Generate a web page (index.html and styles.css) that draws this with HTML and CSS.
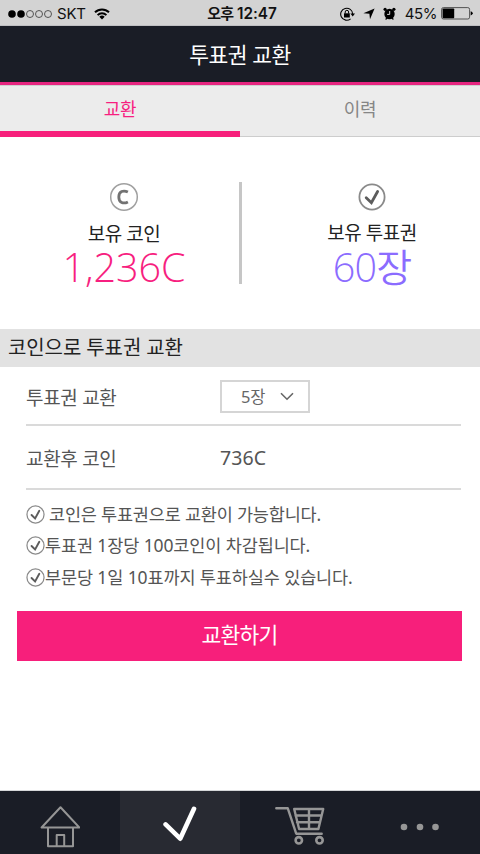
FILE: index.html
```html
<!DOCTYPE html>
<html lang="ko">
<head>
<meta charset="utf-8">
<title>투표권 교환</title>
<link rel="stylesheet" href="styles.css">
</head>
<body>
<svg class="defs" width="0" height="0">
  <symbol id="check-circle" viewBox="0 0 28 28">
    <circle cx="14" cy="14" r="12.6" fill="none" stroke="#8a8a8a" stroke-width="1.8"/>
    <path d="M8.2 14.7l5.2 5L19.6 8.5" fill="none" stroke="#5c5c5c" stroke-width="2.8" stroke-linecap="round"/>
  </symbol>
</svg>
<div class="status">
  <div class="status-left">
    <svg width="45" height="10" viewBox="0 0 45 10"><circle cx="4" cy="5" r="3.8"/><circle cx="13" cy="5" r="3.8"/><g fill="none" stroke="#333" stroke-width=".8"><circle cx="22" cy="5" r="3.5"/><circle cx="31" cy="5" r="3.5"/><circle cx="40" cy="5" r="3.5"/></g></svg>
    <span class="carrier">SKT</span>
    <svg class="wifi" width="16" height="12" viewBox="0 0 16 12"><g fill="none" stroke="#000" stroke-width="2"><path d="M1 4.3a10 10 0 0 1 14 0"/><path d="M3.6 7.1a6.2 6.2 0 0 1 8.8 0"/></g><path d="M5.3 8.8a4 4 0 0 1 5.4 0L8 11.6z"/></svg>
  </div>
  <div class="clock"><span class="ampm">오후</span> 12:47</div>
  <div class="status-right">
    <svg width="15" height="14" viewBox="0 0 15 14"><path d="M10.6 11.8A6 6 0 1 1 12.7 7" fill="none" stroke="#000" stroke-width="1.1"/><path d="M10.4 6.4h4.6l-2.3 3z"/><rect x="4" y="6.3" width="5.8" height="4.2"/><path d="M5.2 6.5V5a1.7 1.7 0 0 1 3.4 0v1.5" fill="none" stroke="#000"/></svg>
    <svg class="loc" width="12" height="12" viewBox="0 0 12 12"><path d="M11.6.4L7 11.3 6.4 5.8.4 5.2z"/></svg>
    <svg class="alarm" width="13" height="13" viewBox="0 0 13 13"><circle cx="6.5" cy="7" r="5.2"/><circle cx="2.1" cy="2.3" r="1.6"/><circle cx="10.9" cy="2.3" r="1.6"/><path d="M2.6 12.5l1.3-1.4M10.4 12.5L9.1 11.1" stroke="#000" stroke-width="1.2"/><path d="M6.7 4v3.4H4.1" fill="none" stroke="#d3d3d3" stroke-width="1"/></svg>
    <span class="percent">45%</span>
    <svg class="battery" width="32" height="13" viewBox="0 0 32 13"><rect x=".6" y=".6" width="28" height="11.4" rx="1.8" fill="none" stroke="#444" stroke-width=".9"/><rect x="1.6" y="1.6" width="11.6" height="9.6" rx=".7"/><path d="M29.7 4.2q2 .6 2 2.1t-2 2.1z"/></svg>
  </div>
</div>
<header class="title"><h1>투표권 교환</h1></header>
<nav class="tabs">
  <div class="tab active"><span>교환</span></div>
  <div class="tab"><span>이력</span></div>
</nav>
<section class="stats">
  <div class="stat coins">
    <svg width="30" height="30" viewBox="0 0 30 30"><circle cx="15" cy="15" r="13.3" fill="none" stroke="#a0a0a0" stroke-width="1.5"/><path d="M18.9 10.1C14.4 7.8 9.8 9.3 9.8 15s4.6 7.2 9.1 4.9" fill="none" stroke="#727272" stroke-width="2.8"/></svg>
    <div class="label"><span>보유 코인</span></div>
    <div class="value"><span>1,236C</span></div>
  </div>
  <div class="divider"></div>
  <div class="stat tickets">
    <svg width="28" height="28"><use href="#check-circle"/></svg>
    <div class="label"><span>보유 투표권</span></div>
    <div class="value"><span>60<b>장</b></span></div>
  </div>
</section>
<h2 class="section-title">코인으로 투표권 교환</h2>
<div class="rows">
  <div class="row first"><span class="name">투표권 교환</span>
    <div class="select"><span>5장</span><svg width="14" height="9" viewBox="0 0 14 9"><path d="M1 1.2l6 6 6-6" fill="none" stroke="#666" stroke-width="1.6"/></svg></div>
  </div>
  <div class="row second"><span class="name">교환후 코인</span><span class="amount">736C</span></div>
</div>
<ul class="notes">
  <li><svg width="19" height="19"><use href="#check-circle"/></svg><span class="n1">코인은 투표권으로 교환이 가능합니다.</span></li>
  <li><svg width="19" height="19"><use href="#check-circle"/></svg><span class="n2">투표권 1장당 100코인이 차감됩니다.</span></li>
  <li><svg width="19" height="19"><use href="#check-circle"/></svg><span class="n3">부문당 1일 10표까지 투표하실수 있습니다.</span></li>
</ul>
<button class="exchange"><span>교환하기</span></button>
<nav class="bottom">
  <div class="item"><svg width="40" height="42" viewBox="0 0 40 42" fill="none" stroke="#969696" stroke-width="2" stroke-linejoin="round"><path d="M20.5 1.2L1.6 21.5h37.8zM8 22v18.2h25V22M16.7 40V29h7.5v11"/></svg></div>
  <div class="item selected"><svg width="34" height="36" viewBox="0 0 34 36"><path d="M2.6 18.4l14.6 14.3L31 2.8" fill="none" stroke="#fff" stroke-width="4.6" stroke-linecap="round" stroke-linejoin="round"/></svg></div>
  <div class="item"><svg width="50" height="40" viewBox="0 0 50 40" fill="none" stroke="#969696" stroke-width="2.4" stroke-linecap="round" stroke-linejoin="round"><path d="M1.3 2.3h11.5l8.4 25.4h25.5M19.2 3h29l-4.8 20H24.1zM20.5 9.5h26M22 16.2h23M34 3v20"/><circle cx="23.8" cy="34.3" r="3.2" stroke-width="2.6"/><circle cx="44.5" cy="34.3" r="3.2" stroke-width="2.6"/></svg></div>
  <div class="item"><svg width="40" height="8" viewBox="0 0 40 8" fill="#969696"><circle cx="4" cy="4" r="3.3"/><circle cx="20" cy="4" r="3.3"/><circle cx="35.5" cy="4" r="3.3"/></svg></div>
</nav>
</body>
</html>
```
FILE: styles.css
```css
* { box-sizing: border-box; }
body {
  margin: 0;
  width: 480px;
  height: 854px;
  overflow: hidden;
  display: flex;
  flex-direction: column;
  background: #fff;
  color: #555;
  font-family: "Noto Sans", "Noto Sans CJK KR", sans-serif;
}
body > * { flex-shrink: 0; }
svg { display: block; flex-shrink: 0; }
.defs { display: none; }
h1, h2, ul { margin: 0; padding: 0; }
span { white-space: nowrap; }

.status {
  height: 26px;
  display: grid;
  grid-template-columns: 1fr auto 1fr;
  align-items: center;
  padding: 0 7px 0 8px;
  background: #d3d3d3;
  border-bottom: 1px solid #bfbfc2;
  color: #111;
  font-family: Inter, "Noto Sans CJK KR", sans-serif;
  font-size: 15px;
  line-height: 25px;
}
.status-left, .status-right { display: flex; align-items: center; }
.status-right { justify-content: flex-end; }
.carrier { margin-left: 4px; letter-spacing: -.2px; }
.wifi { margin-left: 8px; }
.clock { padding-left: 3px; font-weight: 600; font-size: 15.3px; line-height: 27px; }
.ampm { font-size: 15px; letter-spacing: -.8px; font-weight: 700; }
.loc { margin-left: 8px; }
.alarm { margin-left: 8px; }
.percent { margin-left: 9px; letter-spacing: -.4px; }
.battery { margin-left: 4px; }

.title {
  height: 59px;
  display: flex;
  justify-content: center;
  background: #1a1d26;
  border-bottom: 3px solid #e62580;
}
.title h1 { color: #fff; font-size: 21.5px; font-weight: 400; line-height: 57px; letter-spacing: -.5px; }

.tabs { height: 52px; display: flex; background: #ececec; border-top: 1px solid #d0d0d0; }
.tab {
  flex: 1;
  display: flex;
  justify-content: center;
  border-bottom: 1px solid #cdcdcd;
  color: #868686;
  font-size: 18px;
  line-height: 46px;
  letter-spacing: -.3px;
}
.tab.active { color: #f71f80; border-bottom: 6px solid #f71f7b; }

.stats { height: 192px; display: grid; grid-template-columns: 239px 3px 1fr; }
.divider { height: 102px; margin-top: 45px; background: #c6c6c6; }
.stat { display: flex; flex-direction: column; align-items: center; padding-top: 45px; }
.coins { padding-left: 9px; }
.tickets { padding: 46px 0 0 22px; }
.label { height: 29px; line-height: 34px; margin-top: 5px; color: #222; font-size: 19px; letter-spacing: -.5px; }
.value {
  height: 40px;
  line-height: 42px;
  color: #f71f80;
  font-family: "Open Sans", "Noto Sans CJK KR", sans-serif;
  font-size: 39.5px;
  font-weight: 360;
}
.tickets .value { margin-top: 1px; color: #8b6cff; letter-spacing: -.8px; }
.value b { font-weight: 350; font-size: 39px; }

.section-title {
  height: 38px;
  padding-left: 8px;
  background: #e2e2e2;
  color: #222;
  font-size: 20px;
  font-weight: 400;
  line-height: 38px;
  letter-spacing: -.1px;
}
.rows { padding: 0 19px 0 26px; }
.row { display: grid; grid-template-columns: 194px auto 1fr; align-items: center; border-bottom: 2px solid #dadada; font-size: 19px; letter-spacing: -.3px; }
.first { height: 59px; padding-top: 2px; }
.second { height: 64px; padding-top: 1px; }
.select {
  width: 90px;
  height: 33px;
  display: flex;
  align-items: center;
  gap: 15px;
  padding-left: 19px;
  border: 2px solid #d5d5d5;
  color: #666;
  font-size: 16.5px;
}
.select span { margin-top: -2px; }
.amount { font-size: 19.5px; letter-spacing: .1px; }

.notes { list-style: none; padding: 9px 0 0 26px; font-size: 17.5px; letter-spacing: -.12px; }
.notes li { display: flex; align-items: center; height: 31.3px; line-height: 31px; }
.n1 { margin-left: 4px; letter-spacing: -.2px; }

.exchange {
  width: 445px;
  height: 50px;
  margin: 18px 0 0 17px;
  padding: 0;
  border: 0;
  background: #f71f7b;
  color: #fff;
  font: inherit;
  font-size: 21.5px;
  line-height: 46px;
  letter-spacing: -.8px;
}
.exchange span { display: block; margin-top: -2px; }

.bottom { height: 63px; margin-top: auto; display: grid; grid-template-columns: repeat(4, 120px); background: #1a1d26; box-shadow: 0 -1px #d5d7d8; }
.item { display: flex; justify-content: center; padding-top: 15px; }
.item.selected { background: #282a32; }
.item:last-child { padding-top: 32px; }
```
